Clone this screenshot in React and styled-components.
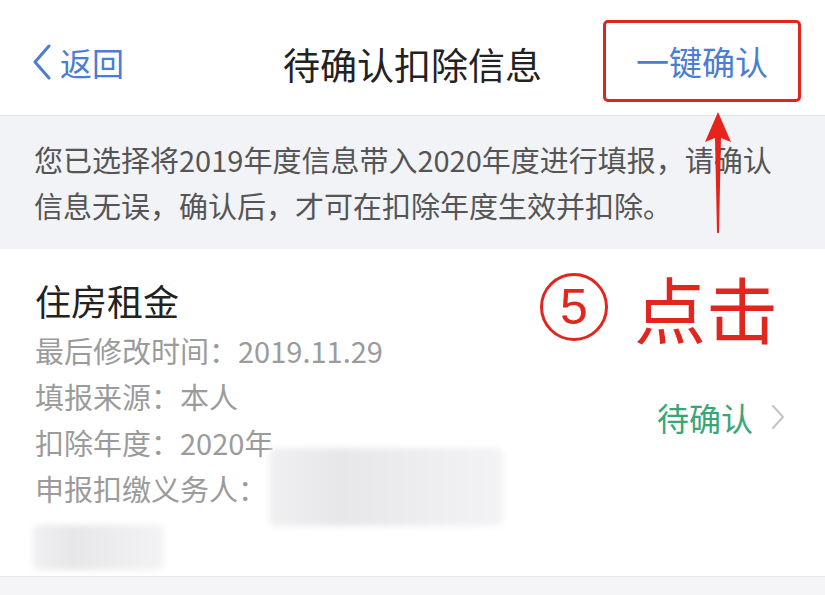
import React from "react";
import styled, { createGlobalStyle } from "styled-components";

const GlobalStyle = createGlobalStyle`
  body {
    margin: 0;
    background: #ffffff;
    font-family: "Noto Sans CJK SC", "Noto Sans", sans-serif;
  }
`;

const Page = styled.div`
  position: relative;
  width: 825px;
  height: 595px;
  overflow: hidden;
  background: #f5f5f7;
`;

const NavBar = styled.div`
  display: grid;
  grid-template-columns: 1fr auto 1fr;
  align-items: center;
  height: 116px;
  padding-top: 9px;
  background: #ffffff;
  border-bottom: 1px solid #e3e3e6;
  box-sizing: border-box;
`;

const Back = styled.div`
  display: flex;
  align-items: center;
  gap: 8px;
  padding-left: 32px;
  color: #4a7dd4;
  font-size: 32px;
  svg {
    width: 20px;
    height: 36px;
  }
`;

const Title = styled.div`
  font-size: 37px;
  color: #222;
  padding-top: 4px;
`;

const ConfirmBox = styled.div`
  justify-self: end;
  margin-right: 24px;
  margin-bottom: 2px;
  width: 198px;
  height: 82px;
  box-sizing: border-box;
  border: 3.5px solid #e0241e;
  border-radius: 5px;
  display: flex;
  align-items: center;
  justify-content: center;
  color: #4a7dd4;
  font-size: 33px;
`;

const Notice = styled.div`
  background: #f2f3f7;
  padding: 20px 36px 21px 34px;
  font-size: 29px;
  line-height: 46px;
  color: #555;
`;

const Card = styled.div`
  display: flex;
  align-items: center;
  justify-content: space-between;
  background: #fff;
  padding: 26px 40px 6px 35px;
  border-bottom: 1px solid #ececef;
`;

const Info = styled.div`
  display: flex;
  flex-direction: column;
`;

const CardTitle = styled.div`
  font-size: 36px;
  line-height: 50px;
  color: #222;
  margin-bottom: 2px;
`;

const Detail = styled.div`
  display: flex;
  align-items: center;
  font-size: 29px;
  line-height: 46px;
  color: #9b9b9b;
`;

const Redacted = styled.span`
  display: block;
  width: ${(p) => p.$w}px;
  height: ${(p) => p.$h}px;
  margin: ${(p) => p.$m || "0"};
  background: linear-gradient(90deg, #f0f0f2 0%, #e7e7ea 30%, #ececef 60%, #f3f3f5 100%);
  border-radius: 6px;
  filter: blur(3px);
`;

const Status = styled.div`
  display: flex;
  align-items: center;
  gap: 18px;
  color: #3aa677;
  font-size: 32px;
  padding-bottom: 12px;
  svg {
    width: 14px;
    height: 26px;
  }
`;

const Callout = styled.div`
  position: absolute;
  left: 540px;
  top: 262px;
  display: flex;
  align-items: center;
  gap: 26px;
  color: #e0261f;
`;

const Circled = styled.span`
  display: flex;
  align-items: center;
  justify-content: center;
  width: 68px;
  height: 68px;
  box-sizing: border-box;
  border: 3.5px solid #e0261f;
  border-radius: 50%;
  font-family: "Liberation Sans", sans-serif;
  font-size: 50px;
  line-height: 1;
`;

const CalloutText = styled.span`
  font-size: 72px;
  font-weight: 400;
  line-height: 90px;
`;

const Arrow = styled.svg`
  position: absolute;
  left: 703px;
  top: 110px;
  width: 30px;
  height: 125px;
`;

export default function App() {
  return (
    <>
      <GlobalStyle />
      <Page>
        <NavBar>
          <Back>
            <svg viewBox="0 0 20 36" fill="none" stroke="#4a7dd4" strokeWidth="3" strokeLinecap="round" strokeLinejoin="round">
              <polyline points="17,2 3,18 17,34" />
            </svg>
            返回
          </Back>
          <Title>待确认扣除信息</Title>
          <ConfirmBox>一键确认</ConfirmBox>
        </NavBar>
        <Notice>
          您已选择将2019年度信息带入2020年度进行填报，请确认信息无误，确认后，才可在扣除年度生效并扣除。
        </Notice>
        <Card>
          <Info>
            <CardTitle>住房租金</CardTitle>
            <Detail>最后修改时间：2019.11.29</Detail>
            <Detail>填报来源：本人</Detail>
            <Detail>扣除年度：2020年</Detail>
            <Detail>
              申报扣缴义务人：
              <Redacted $w={234} $h={78} $m="-17px 0 -15px 2px" />
            </Detail>
            <Redacted $w={131} $h={45} $m="14px 0 0 -2px" />
          </Info>
          <Status>
            待确认
            <svg viewBox="0 0 14 26" fill="none" stroke="#c4c4c6" strokeWidth="2" strokeLinecap="round" strokeLinejoin="round">
              <polyline points="2,2 12,13 2,24" />
            </svg>
          </Status>
        </Card>
        <Callout>
          <Circled>5</Circled>
          <CalloutText>点击</CalloutText>
        </Callout>
        <Arrow viewBox="0 0 30 125">
          <polygon points="15,2 28,32 18,28 16,123 14,123 12,28 2,32" fill="#e8231c" />
        </Arrow>
      </Page>
    </>
  );
}
